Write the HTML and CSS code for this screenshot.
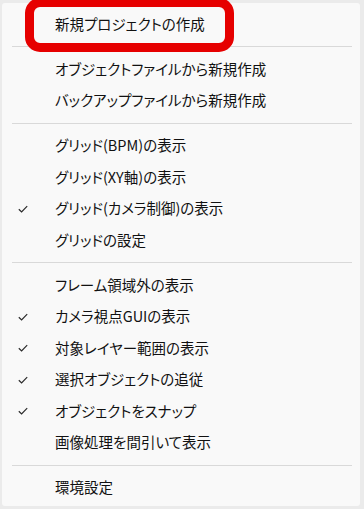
FILE: index.html
```html
<!DOCTYPE html>
<html lang="ja">
<head>
<meta charset="utf-8">
<link rel="stylesheet" href="styles.css">
</head>
<body>
<div class="menu">
  <div class="item"><span class="mark"></span><span class="label">新規プロジェクトの作成</span></div>
  <div class="sep"></div>
  <div class="item"><span class="mark"></span><span class="label">オブジェクトファイルから新規作成</span></div>
  <div class="item"><span class="mark"></span><span class="label">バックアップファイルから新規作成</span></div>
  <div class="sep"></div>
  <div class="item"><span class="mark"></span><span class="label">グリッド(BPM)の表示</span></div>
  <div class="item"><span class="mark"></span><span class="label">グリッド(XY軸)の表示</span></div>
  <div class="item"><span class="mark"><svg class="check" viewBox="0 0 10 8"><path d="M0.8 4.2 L3.6 6.9 L9.2 1.1"/></svg></span><span class="label">グリッド(カメラ制御)の表示</span></div>
  <div class="item"><span class="mark"></span><span class="label">グリッドの設定</span></div>
  <div class="sep"></div>
  <div class="item"><span class="mark"></span><span class="label">フレーム領域外の表示</span></div>
  <div class="item"><span class="mark"><svg class="check" viewBox="0 0 10 8"><path d="M0.8 4.2 L3.6 6.9 L9.2 1.1"/></svg></span><span class="label">カメラ視点GUIの表示</span></div>
  <div class="item"><span class="mark"><svg class="check" viewBox="0 0 10 8"><path d="M0.8 4.2 L3.6 6.9 L9.2 1.1"/></svg></span><span class="label">対象レイヤー範囲の表示</span></div>
  <div class="item"><span class="mark"><svg class="check" viewBox="0 0 10 8"><path d="M0.8 4.2 L3.6 6.9 L9.2 1.1"/></svg></span><span class="label">選択オブジェクトの追従</span></div>
  <div class="item"><span class="mark"><svg class="check" viewBox="0 0 10 8"><path d="M0.8 4.2 L3.6 6.9 L9.2 1.1"/></svg></span><span class="label">オブジェクトをスナップ</span></div>
  <div class="item"><span class="mark"></span><span class="label">画像処理を間引いて表示</span></div>
  <div class="sep"></div>
  <div class="item"><span class="mark"></span><span class="label">環境設定</span></div>
  <div class="highlight"></div>
</div>
</body>
</html>
```
FILE: styles.css
```css
html, body {
  margin: 0;
  height: 100%;
}
body {
  background: #ebebeb;
  padding: 3px 4px 3px 2px;
  box-sizing: border-box;
  font-family: "Noto Sans CJK JP", "Noto Sans", sans-serif;
  font-size: 14.5px;
  color: #111111;
  font-feature-settings: "palt";
}
.menu {
  position: relative;
  height: 100%;
  background: #f9f9f9;
  border-radius: 3px;
  padding-top: 5.25px;
  box-sizing: border-box;
}
.item {
  height: 31.5px;
  display: flex;
  align-items: center;
}
.mark {
  width: 53px;
  flex: none;
  display: flex;
  align-items: center;
  padding-left: 16px;
  box-sizing: border-box;
}
.check {
  width: 10px;
  height: 8px;
  fill: none;
  stroke: #2a2a2a;
  stroke-width: 1.2;
}
.label {
  white-space: nowrap;
  line-height: 1;
}
.sep {
  height: 13.5px;
  display: flex;
  align-items: center;
  margin: 0 8px 0 10px;
}
.sep::before {
  content: "";
  flex: 1;
  height: 1px;
  background: #d9d9d9;
}
.highlight {
  position: absolute;
  left: 23px;
  top: -5px;
  width: 209px;
  height: 54px;
  border: 9px solid #e60000;
  border-radius: 15px;
  box-sizing: border-box;
}
```
